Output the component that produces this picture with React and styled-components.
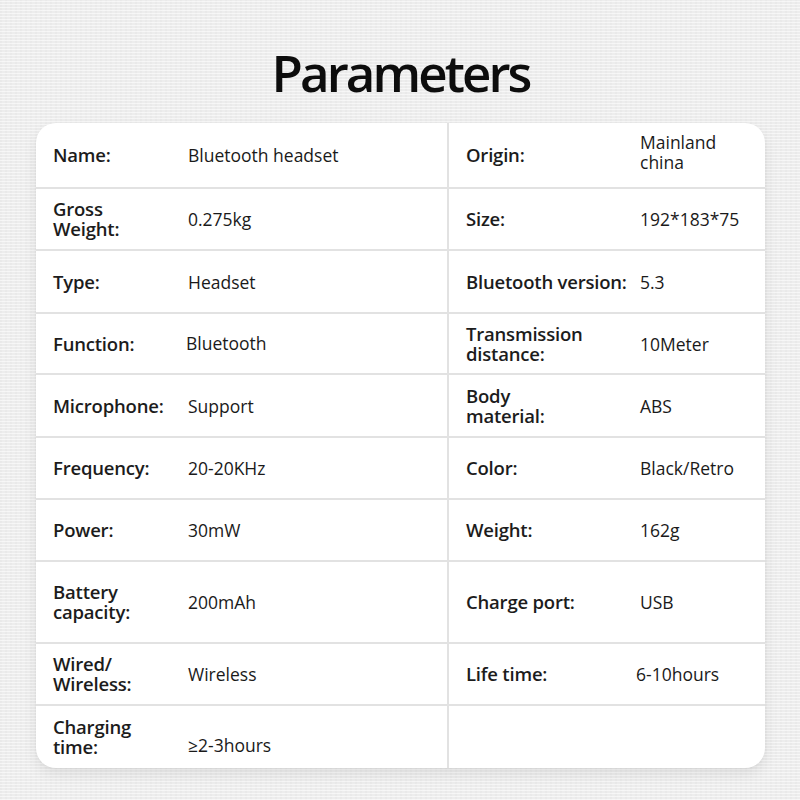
import React from "react";
import styled, { createGlobalStyle } from "styled-components";

const Global = createGlobalStyle`
  html, body { margin: 0; padding: 0; }
  body {
    font-family: "Open Sans", "Noto Sans", sans-serif;
    color: #111;
  }
`;

const Page = styled.div`
  width: 800px;
  height: 800px;
  box-sizing: border-box;
  padding: 47px 35px 0 36px;
  display: flex;
  flex-direction: column;
  align-items: stretch;
  background-color: #ededed;
  background-image:
    repeating-linear-gradient(0deg, rgba(255,255,255,0.55) 0 1px, rgba(0,0,0,0) 1px 3px),
    repeating-linear-gradient(90deg, rgba(0,0,0,0.015) 0 2px, rgba(255,255,255,0.02) 2px 5px);
`;

const Title = styled.h1`
  margin: 0 0 25px 0;
  text-align: center;
  font-family: "Open Sans", sans-serif;
  font-weight: 600;
  font-size: 51px;
  line-height: 51px;
  letter-spacing: -2.9px;
  color: #0d0d0d;
`;

const Card = styled.div`
  background: #fff;
  border-radius: 20px;
  box-shadow: 0 6px 14px rgba(0, 0, 0, 0.08), 0 1px 3px rgba(0, 0, 0, 0.04);
  overflow: hidden;
  display: flex;
  flex-direction: column;
`;

const Row = styled.div`
  display: grid;
  grid-template-columns: 411px 1fr;
  height: ${(p) => p.$h}px;
  box-sizing: border-box;
  border-top: ${(p) => (p.$first ? "none" : "2px solid #e2e2e2")};
`;

const Cell = styled.div`
  display: grid;
  grid-template-columns: ${(p) => (p.$right ? "174px 1fr" : "135px 1fr")};
  align-items: center;
  padding-left: 17px;
  border-left: ${(p) => (p.$right ? "2px solid #e2e2e2" : "none")};
  box-sizing: border-box;
`;

const Label = styled.div`
  font-size: 18.5px;
  font-weight: 600;
  line-height: 20px;
  letter-spacing: -0.2px;
  color: #1c1c1c;
  white-space: pre-line;
`;

const Value = styled.div`
  font-size: 17.5px;
  font-weight: 400;
  line-height: 20px;
  color: #1a1a1a;
  white-space: pre-line;
  transform: translate(${(p) => p.$dx || 0}px, ${(p) => p.$dy || 0}px);
`;

const rows = [
  { h: 64, l: ["Name:", "Bluetooth headset"], r: ["Origin:", "Mainland\nchina"], rdy: -3 },
  { h: 62, l: ["Gross\nWeight:", "0.275kg"], r: ["Size:", "192*183*75"] },
  { h: 63, l: ["Type:", "Headset"], r: ["Bluetooth version:", "5.3"] },
  { h: 61, l: ["Function:", "Bluetooth"], r: ["Transmission\ndistance:", "10Meter"], ldy: -1, ldx: -2 },
  { h: 63, l: ["Microphone:", "Support"], r: ["Body\nmaterial:", "ABS"] },
  { h: 62, l: ["Frequency:", "20-20KHz"], r: ["Color:", "Black/Retro"] },
  { h: 62, l: ["Power:", "30mW"], r: ["Weight:", "162g"] },
  { h: 82, l: ["Battery\ncapacity:", "200mAh"], r: ["Charge port:", "USB"] },
  { h: 62, l: ["Wired/\nWireless:", "Wireless"], r: ["Life time:", "6-10hours"], rdx: -4 },
  { h: 64, l: ["Charging\ntime:", "≥2-3hours"], r: null, ldy: 8 },
];

export default function App() {
  return (
    <>
      <Global />
      <Page>
        <Title>Parameters</Title>
        <Card>
          {rows.map((row, i) => (
            <Row key={i} $h={row.h} $first={i === 0}>
              <Cell>
                <Label>{row.l[0]}</Label>
                <Value $dx={row.ldx} $dy={row.ldy}>{row.l[1]}</Value>
              </Cell>
              <Cell $right>
                {row.r && (
                  <>
                    <Label>{row.r[0]}</Label>
                    <Value $dx={row.rdx} $dy={row.rdy}>{row.r[1]}</Value>
                  </>
                )}
              </Cell>
            </Row>
          ))}
        </Card>
      </Page>
    </>
  );
}
